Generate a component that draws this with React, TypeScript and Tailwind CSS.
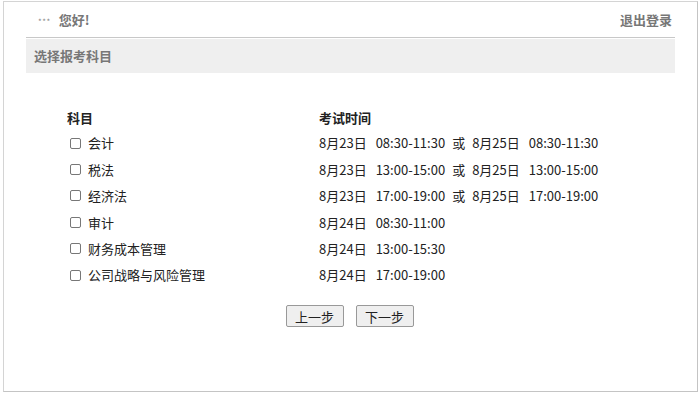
import React from 'react';

const subjects = [
  { name: '会计', times: [['8月23日', '08:30-11:30'], ['8月25日', '08:30-11:30']] },
  { name: '税法', times: [['8月23日', '13:00-15:00'], ['8月25日', '13:00-15:00']] },
  { name: '经济法', times: [['8月23日', '17:00-19:00'], ['8月25日', '17:00-19:00']] },
  { name: '审计', times: [['8月24日', '08:30-11:00']] },
  { name: '财务成本管理', times: [['8月24日', '13:00-15:30']] },
  { name: '公司战略与风险管理', times: [['8月24日', '17:00-19:00']] },
];

export default function App() {
  return (
    <div
      className="w-[700px] h-[393px] bg-white pt-px pl-[3px]"
      style={{ fontFamily: '"Noto Sans CJK SC", "Noto Sans", sans-serif' }}
    >
      <div className="w-[695px] h-[391px] border border-[#d4d4d4] border-r-[#c4c4c4] border-b-[#c4c4c4] px-[22px]">
        {/* header */}
        <div className="h-[36px] flex items-center justify-between border-b border-[#c8c8c8] pl-[12px] pr-[3px]">
          <div className="flex items-center text-[13px] font-bold text-[#777]">
            <span className="text-[8px] leading-none mt-[5px] mr-[8px] font-normal text-[#888] tracking-[0.5px]">***</span>
            <span>您好!</span>
          </div>
          <span className="text-[13px] font-bold text-[#777]">退出登录</span>
        </div>
        <div className="mt-px h-[34px] bg-[#efefef] flex items-center pl-[8px] text-[13px] font-bold text-[#777]">
          选择报考科目
        </div>

        {/* table */}
        <div className="mt-[33px] ml-[41px] text-[13px] text-[#222]">
          <div className="flex h-[24px] items-center font-bold">
            <div className="w-[252px]">科目</div>
            <div>考试时间</div>
          </div>
          {subjects.map((s) => (
            <div key={s.name} className="flex h-[26.4px] items-center">
              <div className="w-[252px] flex items-center">
                <span className="ml-[3px] w-[11px] h-[11px] border border-[#777] rounded-[2px] bg-white" />
                <span className="ml-[7px]">{s.name}</span>
              </div>
              <div className="flex items-center">
                {s.times.map((t, i) => (
                  <span key={i} className="flex items-center">
                    {i > 0 && <span className="mx-[7px]">或</span>}
                    <span>{t[0]}</span>
                    <span className="ml-[9px]">{t[1]}</span>
                  </span>
                ))}
              </div>
            </div>
          ))}
        </div>

        {/* buttons */}
        <div className="mt-[17px] flex justify-center gap-[12px] pr-[2px]">
          <button className="w-[58px] h-[22px] bg-[#efefef] border border-[#999] rounded-[2px] text-[13px] text-[#222] leading-none">
            上一步
          </button>
          <button className="w-[58px] h-[22px] bg-[#efefef] border border-[#999] rounded-[2px] text-[13px] text-[#222] leading-none">
            下一步
          </button>
        </div>
      </div>
    </div>
  );
}
